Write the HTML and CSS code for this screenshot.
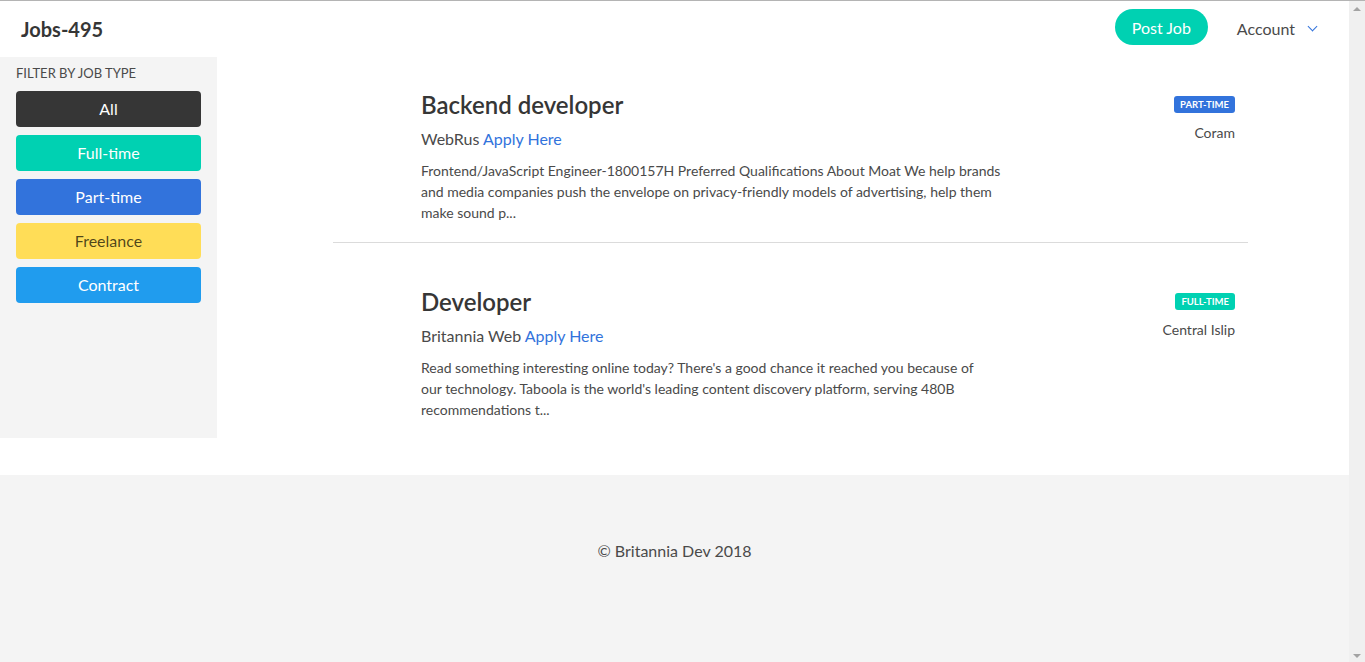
FILE: index.html
```html
<!DOCTYPE html>
<html lang="en">
<head>
<meta charset="utf-8">
<title>Jobs-495</title>
<link rel="stylesheet" href="styles.css">
</head>
<body>
<div class="window">
  <div class="page">
    <nav class="navbar">
      <a class="brand" href="#">Jobs-495</a>
      <div class="nav-end">
        <a class="btn-post" href="#">Post Job</a>
        <a class="account" href="#">Account <span class="chev"></span></a>
      </div>
    </nav>

    <div class="layout">
      <aside class="sidebar">
        <p class="filter-label">FILTER BY JOB TYPE</p>
        <div class="filters">
          <button class="fbtn dark">All</button>
          <button class="fbtn teal">Full-time</button>
          <button class="fbtn blue">Part-time</button>
          <button class="fbtn yellow">Freelance</button>
          <button class="fbtn info">Contract</button>
        </div>
      </aside>

      <main class="jobs">
        <article class="job">
          <div class="job-body">
            <h2 class="job-title">Backend developer</h2>
            <p class="job-company">WebRus <a href="#">Apply Here</a></p>
            <p class="job-desc">Frontend/JavaScript Engineer-1800157H Preferred Qualifications About Moat We help brands and media companies push the envelope on privacy-friendly models of advertising, help them make sound p...</p>
          </div>
          <div class="job-meta">
            <span class="tag tag-blue">PART-TIME</span>
            <p class="location">Coram</p>
          </div>
        </article>
        <article class="job">
          <div class="job-body">
            <h2 class="job-title">Developer</h2>
            <p class="job-company">Britannia Web <a href="#">Apply Here</a></p>
            <p class="job-desc">Read something interesting online today? There's a good chance it reached you because of <span class="nowrap">our technology.</span> Taboola is the world's leading content discovery platform, serving 480B recommendations t...</p>
          </div>
          <div class="job-meta">
            <span class="tag tag-teal">FULL-TIME</span>
            <p class="location">Central Islip</p>
          </div>
        </article>
      </main>
    </div>

    <footer class="footer">
      <p>© Britannia Dev 2018</p>
    </footer>
  </div>
  <div class="scrollbar">
    <span class="arrow up"></span>
    <span class="arrow down"></span>
  </div>
</div>
</body>
</html>
```

FILE: styles.css
```css
* { box-sizing: border-box; }
html, body { margin: 0; padding: 0; }
body {
  font-family: Lato, "Noto Sans", sans-serif;
  color: #4a4a4a;
  font-size: 16px;
  background: #fff;
  border-top: 1px solid #b4b4b4;
  height: 662px;
  overflow: hidden;
}
a { text-decoration: none; }
p, h2 { margin: 0; }
.nowrap { white-space: nowrap; }

.window { display: flex; height: 661px; }
.page { flex: 1; display: flex; flex-direction: column; min-width: 0; }

.navbar {
  height: 56px;
  display: flex;
  align-items: center;
  justify-content: space-between;
  padding: 0 33px 0 21px;
}
.brand { font-size: 20px; font-weight: 700; color: #363636; }
.nav-end { display: flex; align-items: center; }
.btn-post {
  background: #00d1b2;
  color: #fff;
  height: 36px;
  padding: 0 17px;
  border-radius: 999px;
  display: flex;
  align-items: center;
  font-size: 16px;
  margin-top: -4px;
}
.account {
  color: #4a4a4a;
  margin-left: 29px;
  margin-top: -2px;
  display: flex;
  align-items: center;
  font-size: 16px;
}
.chev {
  display: inline-block;
  width: 7px; height: 7px;
  border-left: 1.5px solid #3273dc;
  border-bottom: 1.5px solid #3273dc;
  transform: rotate(-45deg);
  margin: -4px 0 0 14px;
}

.layout { display: flex; }
.sidebar {
  width: 217px;
  background: #f4f4f4;
  padding: 8px 16px 0;
}
.filter-label { font-size: 13px; line-height: 17px; color: #4a4a4a; }
.filters { display: flex; flex-direction: column; gap: 8px; margin-top: 9px; }
.fbtn {
  height: 36px;
  border: 0;
  border-radius: 4px;
  font-family: inherit;
  font-size: 16px;
  color: #fff;
  padding: 0 0 2px;
}
.fbtn.dark { background: #363636; }
.fbtn.teal { background: #00d1b2; }
.fbtn.blue { background: #3273dc; }
.fbtn.yellow { background: #ffdd57; color: rgba(0,0,0,.7); }
.fbtn.info { background: #209cee; }

.jobs { flex: 1; padding: 0 101px 0 116px; }
.job {
  display: flex;
  padding: 34px 13px 19px 88px;
  border-bottom: 1px solid #dbdbdb;
}
.job + .job { padding-top: 45px; padding-bottom: 18px; border-bottom: 0; }
.job-body { width: 585px; }
.job-title { font-size: 24px; line-height: 27px; font-weight: 600; color: #363636; }
.job-company { font-size: 16px; line-height: 24px; margin-top: 9px; }
.job-company a { color: #3273dc; }
.job-desc { font-size: 14px; line-height: 21px; margin-top: 9px; }

.job-meta { margin-left: auto; display: flex; flex-direction: column; align-items: flex-end; padding-top: 5px; }
.tag {
  font-size: 9.5px;
  font-weight: 700;
  color: #fff;
  height: 17px;
  line-height: 17px;
  padding: 0 6px;
  border-radius: 3px;
}
.tag-blue { background: #3273dc; }
.tag-teal { background: #00d1b2; }
.location { font-size: 14px; line-height: 20px; margin-top: 10px; }

.footer {
  margin-top: 37px;
  flex: 1;
  background: #f4f4f4;
  padding-top: 64px;
  text-align: center;
  font-size: 16px;
  line-height: 24px;
}

.scrollbar {
  width: 16px;
  background: #f0f0f0;
  display: flex;
  flex-direction: column;
  justify-content: space-between;
  align-items: center;
  padding: 6px 0 4px;
}
.arrow { width: 0; height: 0; border-left: 4px solid transparent; border-right: 4px solid transparent; }
.arrow.up { border-bottom: 4px solid #a3a3a3; }
.arrow.down { border-top: 4px solid #a3a3a3; }
```
